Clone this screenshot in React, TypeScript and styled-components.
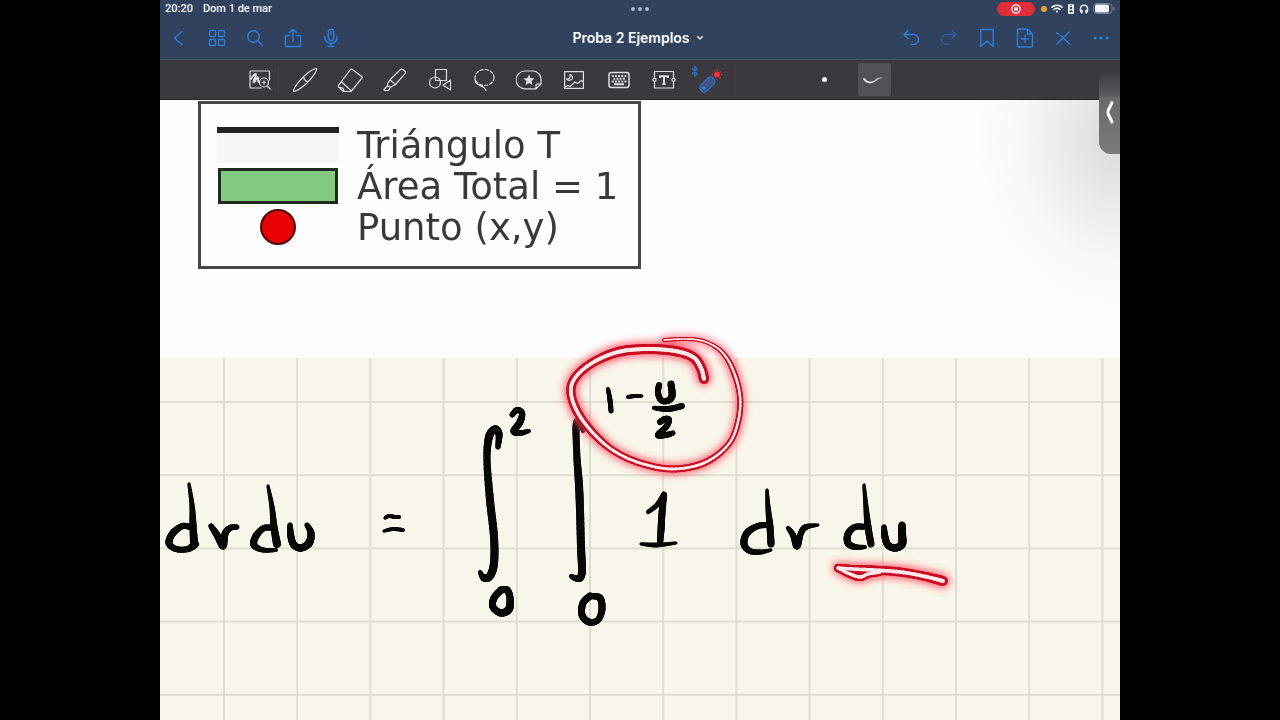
import React from "react";
import styled, { createGlobalStyle, css } from "styled-components";

const GlobalStyle = createGlobalStyle`
  *, *::before, *::after { box-sizing: border-box; }
  body {
    margin: 0;
    background: #000;
    font-family: Inter, "Liberation Sans", sans-serif;
  }
`;

/* ---------- Layout ---------- */

const Screen = styled.div`
  display: flex;
  justify-content: center;
  height: 100vh;
  background: #000;
`;

const Tablet = styled.div`
  position: relative;
  display: flex;
  flex-direction: column;
  width: 75%;
  overflow: hidden;
  background: #fefdfe;
`;

const Header = styled.header`
  flex: none;
  background: #31425f;
  border-bottom: 1px solid #45506a;
`;

const StatusBar = styled.div`
  display: grid;
  grid-template-columns: 1fr auto 1fr;
  align-items: center;
  height: 17px;
  padding: 0 5px;
  color: #f3f6fb;
  font-family: Roboto, "Liberation Sans", sans-serif;
  font-size: 11px;
  font-weight: 500;
  line-height: 17px;
`;

const StatusGroup = styled.div<{ $end?: boolean }>`
  display: flex;
  align-items: center;
  gap: ${(p) => (p.$end ? 4 : 10)}px;
  justify-content: ${(p) => (p.$end ? "flex-end" : "flex-start")};
`;

const MultitaskDots = styled.div`
  display: flex;
  gap: 3px;
`;

const Dot = styled.span<{ $size: number; $color: string }>`
  width: ${(p) => p.$size}px;
  height: ${(p) => p.$size}px;
  border-radius: 50%;
  background: ${(p) => p.$color};
`;

const RecordingPill = styled.span`
  display: flex;
  align-items: center;
  justify-content: center;
  width: 38px;
  height: 14px;
  margin-right: 2px;
  border-radius: 7px;
  background: #e22c37;
`;

const NavBar = styled.nav`
  display: grid;
  grid-template-columns: 1fr auto 1fr;
  align-items: center;
  height: 42px;
`;

const NavGroup = styled.div<{ $end?: boolean }>`
  display: flex;
  justify-content: ${(p) => (p.$end ? "flex-end" : "flex-start")};
`;

const bareButton = css`
  display: flex;
  align-items: center;
  justify-content: center;
  padding: 0;
  border: 0;
  background: none;
  font: inherit;
  cursor: pointer;
`;

const NavButton = styled.button`
  ${bareButton}
  width: 38px;
  height: 38px;
  color: #2b7fdb;
  &:disabled { color: #2c5f9c; cursor: default; }
`;

const TitleButton = styled.button`
  ${bareButton}
  gap: 6px;
  padding-right: 4px;
  color: #fff;
  font-size: 14px;
  font-weight: 600;
  line-height: 20px;
`;

const Toolbar = styled.div`
  display: flex;
  flex: none;
  align-items: center;
  height: 40px;
  padding-left: 78px;
  background: #3b393d;
  border-bottom: 1px solid #29272b;
`;

const ToolGroup = styled.div`
  display: flex;
  flex: 0 1 493px;
`;

const ToolButton = styled.button<{ $divided?: boolean }>`
  ${bareButton}
  position: relative;
  flex: 1;
  height: 36px;
  color: #dedde0;
  ${(p) =>
    p.$divided &&
    css`
      &::after {
        content: "";
        position: absolute;
        right: 4px;
        top: 4px;
        bottom: 4px;
        width: 1px;
        background: #434145;
      }
    `}
`;

const Divider = styled.span`
  width: 1px;
  height: 32px;
  margin: 0 72px 0 4px;
  background: #434145;
`;

const ModeButton = styled.button<{ $active?: boolean }>`
  ${bareButton}
  width: 33px;
  height: 33px;
  margin-right: 17px;
  border-radius: 3px;
  background: ${(p) => (p.$active ? "#535156" : "transparent")};
`;

const Workspace = styled.main`
  display: flex;
  flex: 1;
  flex-direction: column;
  min-height: 0;
`;

const FigurePage = styled.section`
  flex: none;
  height: 258px;
  padding: 1px 38px;
  background: radial-gradient(ellipse 150px 180px at 100% 15%, #d9d8db, #e9e8ea 35%, #f8f7f9 70%, #fefdfe);
`;

const NotePage = styled.section`
  flex: 1;
  min-height: 0;
  background: #f8f6ea;
`;

const Sheet = styled.svg`
  display: block;
  width: 100%;
  height: 100%;
  overflow: visible;
`;

const Legend = styled.ul`
  width: 443px;
  margin: 0;
  padding: 20px 15px 19px 16px;
  border: 3px solid #48474a;
  background: #fefdfe;
  list-style: none;
  filter: blur(0.7px);
`;

const LegendRow = styled.li`
  display: flex;
  gap: 18px;
  height: 41px;
  color: #39393b;
  font-family: "DejaVu Sans", sans-serif;
  font-size: 37px;
  line-height: 43px;
  white-space: nowrap;
`;

const Swatch = styled.span`
  display: flex;
  flex: none;
  align-items: center;
  justify-content: center;
  width: 122px;
`;

const LineSwatch = styled.span`
  width: 122px;
  height: 36px;
  border-top: 6px solid #222;
  background: #f6f5f7;
`;

const AreaSwatch = styled.span`
  width: 120px;
  height: 36px;
  border: 3px solid #1f2b1f;
  background: #85ca82;
`;

const PointSwatch = styled.span`
  width: 36px;
  height: 36px;
  border: 2px solid #4d0a0c;
  border-radius: 50%;
  background: #e80003;
`;

const SideTab = styled.button`
  ${bareButton}
  position: absolute;
  top: 72px;
  right: 0;
  width: 21px;
  height: 82px;
  border-radius: 8px 0 0 12px;
  background: linear-gradient(#3e3c40, #59575b 28%, #6b6a6d 32%, #7a797c);
`;

/* ---------- Icons ---------- */

type IconProps = { w: number; h: number; sw?: number; children: React.ReactNode };

const Icon = ({ w, h, sw = 1.2, children }: IconProps) => (
  <svg
    width={w}
    height={h}
    viewBox={`0 0 ${w} ${h}`}
    fill="none"
    stroke="currentColor"
    strokeWidth={sw}
    strokeLinecap="round"
    strokeLinejoin="round"
    aria-hidden="true"
  >
    {children}
  </svg>
);

const leftNav = [
  { label: "Atrás", icon: <Icon w={18} h={18} sw={1.5}><path d="M12 2.5 4.5 9l7.500 6.500" /></Icon> },
  {
    label: "Miniaturas",
    icon: (
      <Icon w={18} h={18} sw={1.3}>
        <rect x="1.500" y="1.500" width="6" height="6" rx="1" />
        <rect x="10.500" y="1.500" width="6" height="6" rx="1" />
        <rect x="1.500" y="10.500" width="6" height="6" rx="1" />
        <rect x="10.500" y="10.500" width="6" height="6" rx="1" />
      </Icon>
    ),
  },
  { label: "Buscar", icon: <Icon w={18} h={18} sw={1.4}><circle cx="7.500" cy="7.500" r="5.800" /><path d="m12 12 4.500 4.500" /></Icon> },
  {
    label: "Compartir",
    icon: (
      <Icon w={18} h={20} sw={1.4}>
        <path d="M5.500 7.500h-4v11h15v-11h-4M9 13.500V1.500M5.500 4.500 9 1.200l3.500 3.300" />
      </Icon>
    ),
  },
  {
    label: "Grabar audio",
    icon: (
      <Icon w={16} h={20} sw={1.4}>
        <rect x="5.300" y="1.300" width="5.400" height="11.500" rx="2.700" />
        <path d="M2 8.500v1.500a6 5.500 0 0 0 12 0V8.500M8 15.500v3M5 18.500h6M8 4v3" />
      </Icon>
    ),
  },
];

const rightNav = [
  { label: "Deshacer", icon: <Icon w={18} h={18} sw={1.4}><path d="M6 1.500 2 5.500l4 4M2 5.500h9.500a5 5 0 0 1 0 10H9" /></Icon> },
  { label: "Rehacer", disabled: true, icon: <Icon w={18} h={18} sw={1.4}><path d="m12 1.500 4 4-4 4M16 5.500H6.500a5 5 0 0 0 0 10H9" /></Icon> },
  { label: "Marcador", icon: <Icon w={16} h={20} sw={1.4}><path d="M1.800 1.500h12.400v17L8 13l-6.200 5.500z" /></Icon> },
  {
    label: "Añadir página",
    icon: (
      <Icon w={18} h={20} sw={1.4}>
        <path d="M11.500 1H3a1.500 1.500 0 0 0-1.500 1.500v15A1.500 1.500 0 0 0 3 19h12a1.500 1.500 0 0 0 1.500-1.500V6zM11.500 1v5h5M9 7.500v7M5.500 11h7" />
      </Icon>
    ),
  },
  { label: "Solo lectura", icon: <Icon w={16} h={16} sw={1.4}><path d="M2 14 14 2M1.500 2.500l2.800 2M6 5.500l8.500 8.500" /></Icon> },
  {
    label: "Más",
    icon: (
      <Icon w={18} h={6} sw={0}>
        <g fill="currentColor"><circle cx="3" cy="3" r="1.600" /><circle cx="9" cy="3" r="1.600" /><circle cx="15" cy="3" r="1.600" /></g>
      </Icon>
    ),
  },
];

const tools = [
  {
    label: "Zoom",
    icon: (
      <Icon w={22} h={22}>
        <path d="M20.500 11V3a1 1 0 0 0-1-1H2a1 1 0 0 0-1 1v15a1 1 0 0 0 1 1h10" />
        <path d="M2 10c1.500-3 4-5.500 5-4.800S3.500 12.500 4.500 13.300 8 7.500 9 8.200s-1 4.800 1 4.800" strokeWidth="1.900" />
        <circle cx="15" cy="13.500" r="4.500" />
        <path d="m18.200 16.700 3 3.300M15 11.800v3.400M13.300 13.500h3.400" />
      </Icon>
    ),
  },
  {
    label: "Bolígrafo",
    icon: (
      <Icon w={26} h={26}>
        <path d="M1.500 24.500c0-3 2.500-6.500 6-10.500C12.500 8 20.500 1.500 24.500 1.500c1 2-4.500 9.500-9.500 14.500-5 4.500-10 8.500-13.500 8.500zM11.500 9.800c.5 2.200 2 4.200 4.500 5" />
      </Icon>
    ),
  },
  {
    label: "Borrador",
    icon: (
      <Icon w={26} h={26}>
        <path d="M15 2.200 24.800 9.500a1.200 1.200 0 0 1 .1 1.600L14 24.500H6.500L1.500 19.800a1.200 1.200 0 0 1 0-1.500L13.500 2.500a1 1 0 0 1 1.500-.3zM4.500 14.800l9 8.500M1.800 20l4 1 1.500 3.500" />
      </Icon>
    ),
  },
  {
    label: "Marcador fluorescente",
    icon: (
      <Icon w={24} h={24}>
        <path d="M17.500 1.500c1-.8 2-.3 3.500.8s2 2.200 1 3.400L12.500 16.500 7 11.800zM7 11.800l-2.500 3.700.4 2.500 2.600 1.200 5-2.700M4.700 17.500 1 21.500l.5 1h4l2-3.300" />
      </Icon>
    ),
  },
  {
    label: "Formas",
    icon: (
      <Icon w={24} h={24}>
        <rect x="7.500" y="1.500" width="11" height="11" />
        <circle cx="7" cy="14.500" r="5.500" />
        <path d="m22.500 12-7.500 5 7.500 5z" />
      </Icon>
    ),
  },
  {
    label: "Lazo",
    icon: (
      <Icon w={22} h={24}>
        <ellipse cx="11.500" cy="9.500" rx="9.500" ry="8" strokeDasharray="3.200 2" />
        <path d="M2 11.500c0 3 2 4.800 5.500 6.300 2.500 1 4.500 1.700 5.500 4.700" />
      </Icon>
    ),
  },
  {
    label: "Elementos",
    icon: (
      <Icon w={26} h={20}>
        <path d="M20 18.800H9A8.500 8.500 0 0 1 9 1h8a8.300 8.300 0 0 1 8 8.300v4.700L20 18.800V15a1 1 0 0 1 1-1h4" />
        <path d="m13 4.500 1.600 3.600 3.900.4-2.900 2.600.8 3.900L13 13l-3.400 2 .8-3.900-2.900-2.600 3.900-.4z" fill="currentColor" stroke="none" />
      </Icon>
    ),
  },
  {
    label: "Imagen",
    icon: (
      <Icon w={20} h={18}>
        <rect x=".6" y=".6" width="18.800" height="16.800" />
        <path d="M6 3.500c.5 3-1 5-3.500 4.500 1 2 5.500 2 6-1 .2-2-1-3-2.500-3.500zM1 16l3-1.500 2 1 5-4.500 2.500 1.500 4-3 2 1.500" />
      </Icon>
    ),
  },
  {
    label: "Teclado",
    icon: (
      <Icon w={22} h={18}>
        <rect x="1" y="1.500" width="20" height="15" rx="2.500" strokeWidth="1.500" />
        <g strokeLinecap="butt" strokeWidth="2">
          <path d="M3.800 5h14.600M3.800 10.400h14.600" strokeDasharray="1.900 1.280" />
          <path d="M5.400 7.700h11.600" strokeDasharray="1.900 1.280" />
          <path d="M6 13.200h10" />
        </g>
      </Icon>
    ),
  },
  {
    label: "Texto",
    icon: (
      <Icon w={24} h={20}>
        <path d="M2.500 7V1.500h19V7M2.500 12.500V18h19v-5.500" />
        <circle cx="2.500" cy="9.800" r="1.600" />
        <circle cx="21.500" cy="9.800" r="1.600" />
        <path d="M8 8V6.200h8V8M12 6.200V14M10.500 14h3" strokeWidth="1.900" strokeLinecap="butt" />
      </Icon>
    ),
  },
  {
    label: "Puntero láser",
    icon: (
      <Icon w={38} h={30}>
        <path d="m2.500 3.500 4.500 5L4.800 11V1.500L7 4 2.500 8.500" stroke="#1f6fcd" strokeWidth="1.500" />
        <g transform="rotate(-45 17 20)">
          <rect x="9" y="15.800" width="17" height="8.400" rx="3.600" fill="#2c5594" stroke="#2f78cc" />
          <rect x="15" y="17.500" width="8" height="4.500" rx="2" fill="#54527c" stroke="none" />
          <circle cx="12.500" cy="20" r="1.200" stroke="#5f94d4" strokeWidth=".8" />
        </g>
        <circle cx="27" cy="9.500" r="2.900" fill="#f0343e" stroke="none" />
        <circle cx="27" cy="9.500" r="4.600" stroke="#d2323c" strokeWidth="1.300" strokeDasharray=".4 3.200" />
      </Icon>
    ),
  },
];

/* ---------- Ink ---------- */

// Each sample is x, y and pen width.
type Sample = [number, number, number];

const spline = (a: number, b: number, c: number, d: number, t: number) =>
  0.5 * (2 * b + (c - a) * t + (2 * a - 5 * b + 4 * c - d) * t * t + (3 * b - a - 3 * c + d) * t * t * t);

const smooth = (pts: Sample[], steps = 8): Sample[] => {
  const out: Sample[] = [];
  for (let i = 0; i < pts.length - 1; i++) {
    const a = pts[Math.max(i - 1, 0)];
    const b = pts[i];
    const c = pts[i + 1];
    const d = pts[Math.min(i + 2, pts.length - 1)];
    for (let s = 0; s < steps; s++) {
      const t = s / steps;
      out.push([spline(a[0], b[0], c[0], d[0], t), spline(a[1], b[1], c[1], d[1], t), b[2] + (c[2] - b[2]) * t]);
    }
  }
  out.push(pts[pts.length - 1]);
  return out;
};

const PenStroke = ({ samples, scale = 1 }: { samples: Sample[]; scale?: number }) => {
  const pts = smooth(samples);
  return (
    <>
      {pts.slice(1).map((p, i) => (
        <line key={i} x1={pts[i][0]} y1={pts[i][1]} x2={p[0]} y2={p[1]} strokeWidth={p[2] * scale} />
      ))}
    </>
  );
};

const ink: Sample[][] = [
  // dv du
  [[193, 528, 6], [183, 526, 6], [173, 533, 7], [169, 543, 7], [176, 549, 6], [188, 549, 6], [195, 544, 8]],
  [[189, 484, 3], [192, 505, 5], [193, 525, 7], [194, 543, 8]],
  [[211, 526, 5], [217, 535, 7], [223, 546, 7], [225, 534, 7], [230, 528, 6], [237, 527, 5]],
  [[268, 486, 3], [272, 507, 5], [274, 527, 7], [277, 544, 8]],
  [[273, 528, 6], [264, 528, 6], [256, 536, 7], [254, 545, 7], [263, 550, 5], [276, 550, 4]],
  [[290, 525, 5], [291, 537, 7], [294, 545, 7], [301, 548, 7], [309, 543, 8], [311, 533, 7], [307, 525, 5]],
  // equals
  [[385, 518, 3], [389, 516, 4], [395, 517, 4], [399, 517, 4]],
  [[384, 531, 3], [393, 529, 4], [403, 530, 4]],
  // first integral and its limits
  [[498, 447, 5], [499, 434, 7], [495, 429, 7], [489, 437, 8], [487, 460, 7], [490, 500, 8], [494, 537, 8], [494, 563, 8], [490, 576, 8], [484, 578, 7], [480, 572, 4]],
  [[512, 415, 5], [517, 410, 6], [522, 413, 6], [520, 422, 7], [514, 431, 7], [520, 433, 6], [529, 431, 4]],
  [[501, 590, 7], [494, 598, 7], [493, 607, 7], [501, 613, 7], [509, 609, 8], [510, 598, 7], [507, 590, 7], [501, 590, 7]],
  // second integral and its limits
  [[583, 431, 4], [581, 424, 5], [577, 421, 6], [576, 430, 7], [577, 458, 7], [579, 485, 8], [580, 510, 8], [581, 547, 8], [582, 570, 8], [580, 578, 7], [575, 578, 6], [571, 576, 4]],
  [[590, 596, 7], [583, 603, 7], [582, 615, 7], [589, 622, 7], [598, 620, 6], [602, 609, 7], [600, 598, 7], [592, 596, 6]],
  [[608, 389, 4], [610, 400, 5], [611, 411, 5]],
  [[628, 397, 4], [635, 396, 4], [642, 396, 3]],
  [[659, 385, 6], [658, 393, 6], [661, 400, 6], [667, 401, 6], [672, 396, 7], [671, 384, 7]],
  [[654, 408, 4], [668, 409, 6], [682, 406, 6]],
  [[660, 422, 6], [665, 419, 6], [669, 420, 6], [666, 427, 6], [658, 435, 6], [666, 435, 6], [673, 433, 5]],
  // integrand
  [[648, 512, 4], [657, 505, 5], [664, 494, 5]],
  [[664, 495, 6], [662, 513, 7], [661, 530, 7], [660, 543, 6]],
  [[641, 544, 3], [657, 545, 5], [676, 543, 3]],
  [[767, 490, 3], [768, 507, 5], [770, 527, 7], [771, 544, 7]],
  [[770, 525, 6], [758, 526, 6], [747, 533, 7], [744, 544, 7], [750, 551, 6], [761, 552, 5], [771, 550, 3]],
  [[788, 528, 4], [793, 535, 6], [797, 546, 7], [801, 533, 6], [806, 527, 6], [818, 525, 3]],
  [[864, 485, 3], [866, 507, 5], [868, 527, 7], [871, 544, 7]],
  [[866, 527, 6], [855, 527, 6], [848, 534, 7], [848, 543, 7], [855, 547, 6], [865, 547, 4]],
  [[884, 527, 5], [885, 537, 7], [888, 545, 7], [895, 548, 7], [902, 544, 8], [902, 533, 8], [902, 525, 7]],
];

const laser: Sample[][] = [
  [
    [704, 379, 10], [701, 368, 10], [693, 357, 10], [675, 351, 10], [647, 349, 10], [618, 352, 10], [592, 363, 9],
    [575, 378, 9], [571, 393, 9], [578, 413, 9], [594, 434, 8], [614, 451, 7], [640, 463, 7], [672, 469, 7],
    [704, 463, 7], [728, 445, 6], [738, 422, 6], [740, 396, 6], [733, 370, 6], [722, 352, 5], [706, 342, 4],
    [688, 339, 4], [664, 340, 4],
  ],
  [[838, 568, 8], [853, 569, 8], [873, 570, 9], [900, 572, 9], [923, 576, 9], [943, 581, 10]],
  [[838, 568, 8], [850, 574, 8], [860, 577, 8], [868, 574, 8], [880, 572, 8]],
];

const LaserLayer = ({ scale, color, filter }: { scale: number; color: string; filter?: string }) => (
  <g stroke={color} filter={filter}>
    {laser.map((samples, i) => (
      <PenStroke key={i} samples={samples} scale={scale} />
    ))}
  </g>
);

const Notes = () => (
  <Sheet
    viewBox="160 358 960 362"
    preserveAspectRatio="xMinYMin slice"
    role="img"
    aria-label="dv du = ∫₀² ∫₀^(1 − u/2) 1 dv du"
  >
    <defs>
      <pattern id="squares" x="223" y="401" width="73.200" height="73.200" patternUnits="userSpaceOnUse">
        <path d="M1 0v73.200M0 1h73.200" stroke="#dfddd2" strokeWidth="2" />
      </pattern>
      <filter id="glow" x="-20%" y="-20%" width="140%" height="140%">
        <feGaussianBlur stdDeviation="4" />
      </filter>
    </defs>
    <rect x="160" y="358" width="960" height="362" fill="url(#squares)" />
    <g fill="none" stroke="#080807" strokeLinecap="round">
      {ink.map((samples, i) => (
        <PenStroke key={i} samples={samples} />
      ))}
      <LaserLayer scale={1.3} color="#ff4a5c" filter="url(#glow)" />
      <LaserLayer scale={1} color="#cb0c22" />
      <LaserLayer scale={0.4} color="#fdeae8" />
    </g>
  </Sheet>
);

/* ---------- App ---------- */

export default function App() {
  return (
    <>
      <GlobalStyle />
      <Screen>
        <Tablet>
          <Header>
            <StatusBar>
              <StatusGroup>
                <span>20:20</span>
                <span>Dom 1 de mar</span>
              </StatusGroup>
              <MultitaskDots>
                <Dot $size={4} $color="#a9bbdc" />
                <Dot $size={4} $color="#a9bbdc" />
                <Dot $size={4} $color="#a9bbdc" />
              </MultitaskDots>
              <StatusGroup $end>
                <RecordingPill>
                  <Icon w={10} h={10} sw={1.2}>
                    <circle cx="5" cy="5" r="4.200" />
                    <circle cx="5" cy="5" r="2" fill="currentColor" stroke="none" />
                  </Icon>
                </RecordingPill>
                <Dot $size={6} $color="#f0a02c" />
                <Icon w={12} h={9} sw={1.6}>
                  <path d="M1 3.200a7.500 7.500 0 0 1 10 0M3 5.500a4.500 4.500 0 0 1 6 0" />
                  <circle cx="6" cy="7.600" r="1.100" fill="currentColor" stroke="none" />
                </Icon>
                <Icon w={8} h={10} sw={0}>
                  <rect x="1" y="0" width="6" height="10" rx="1.200" fill="currentColor" />
                  <circle cx="4" cy="4" r="1.300" fill="#31425f" />
                  <path d="M2 8.300a2 2 0 0 1 4 0zM3 1.200h2v.7H3z" fill="#31425f" />
                </Icon>
                <Icon w={10} h={10} sw={1.2}>
                  <path d="M2.500 8.500C.5 7 .5 1.200 5 1.200S9.500 7 7.500 8.500" />
                  <path d="M2.700 6.500v2M7.300 6.500v2" strokeWidth="2" />
                </Icon>
                <Icon w={22} h={11} sw={1}>
                  <rect x=".5" y=".5" width="18.500" height="10" rx="3" stroke="#73819a" />
                  <rect x="2" y="1.500" width="14" height="8" rx="1.500" fill="currentColor" stroke="none" />
                  <path d="M21 4.500v2" stroke="#8d99ae" />
                </Icon>
              </StatusGroup>
            </StatusBar>
            <NavBar>
              <NavGroup>
                {leftNav.map((item) => (
                  <NavButton key={item.label} aria-label={item.label}>{item.icon}</NavButton>
                ))}
              </NavGroup>
              <TitleButton>
                Proba 2 Ejemplos
                <Icon w={8} h={6} sw={1.2}><path d="m1.500 1.500 2.500 2.500 2.500-2.500" /></Icon>
              </TitleButton>
              <NavGroup $end>
                {rightNav.map((item) => (
                  <NavButton key={item.label} aria-label={item.label} disabled={item.disabled}>{item.icon}</NavButton>
                ))}
              </NavGroup>
            </NavBar>
          </Header>

          <Toolbar role="toolbar">
            <ToolGroup>
              {tools.map((tool, i) => (
                <ToolButton key={tool.label} aria-label={tool.label} $divided={i === 0}>{tool.icon}</ToolButton>
              ))}
            </ToolGroup>
            <Divider />
            <ModeButton aria-label="Punto"><Dot $size={5} $color="#fff" /></ModeButton>
            <ModeButton aria-label="Trazo" $active>
              <svg width="26" height="10" viewBox="0 0 26 10" fill="none" strokeLinecap="round" aria-hidden="true">
                <defs>
                  <linearGradient id="fade">
                    <stop offset=".4" stopColor="#fff" />
                    <stop offset="1" stopColor="#737176" />
                  </linearGradient>
                </defs>
                <path d="M2 4c2.500 4 8 4.500 11.500 1.500C16 3 17 2.500 20.500 2.500" stroke="url(#fade)" strokeWidth="1.600" />
              </svg>
            </ModeButton>
          </Toolbar>

          <Workspace>
            <FigurePage>
              <Legend>
                <LegendRow><Swatch><LineSwatch /></Swatch>Triángulo T</LegendRow>
                <LegendRow><Swatch><AreaSwatch /></Swatch>Área Total = 1</LegendRow>
                <LegendRow><Swatch><PointSwatch /></Swatch>Punto (x,y)</LegendRow>
              </Legend>
            </FigurePage>
            <NotePage>
              <Notes />
            </NotePage>
          </Workspace>

          <SideTab aria-label="Abrir panel lateral">
            <svg width="10" height="26" viewBox="0 0 10 26" fill="none" stroke="#fff" strokeWidth="3" strokeLinecap="round" strokeLinejoin="round" aria-hidden="true">
              <path d="M7 2.500 3.200 10.500c-.6 1.300-.6 2.200 0 3.500L7 22" />
            </svg>
          </SideTab>
        </Tablet>
      </Screen>
    </>
  );
}
